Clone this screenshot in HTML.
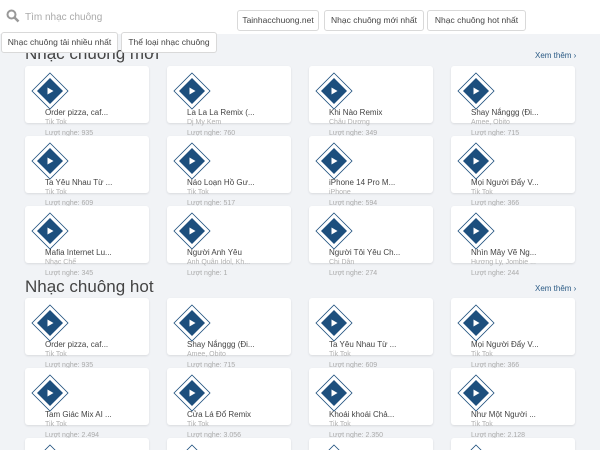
<!DOCTYPE html>
<html><head><meta charset="utf-8"><style>
*{margin:0;padding:0;box-sizing:border-box}
html,body{width:600px;height:450px;overflow:hidden}
body{background:#f1f3f6;font-family:"Liberation Sans",sans-serif;position:relative}
.hdr{position:absolute;left:0;top:0;width:600px;height:34px;background:#fff}
.btn{position:absolute;height:21px;border:1px solid #d9d9d9;border-radius:3px;background:#fff;font-size:8.5px;color:#444;line-height:19px;text-align:center;white-space:nowrap}
.h2{position:absolute;left:25px;font-size:17px;color:#444}
.more{position:absolute;left:535px;font-size:8px;color:#2a5a85}
.c{position:absolute;width:124px;height:57px;background:#fff;border-radius:3px;box-shadow:0 1px 2px rgba(0,0,0,.1)}
.c svg{position:absolute;left:6px;top:6px}
.e{height:12px;overflow:hidden;border-radius:3px 3px 0 0}
.t{position:absolute;left:20px;top:42px;font-size:8px;color:#444;white-space:nowrap}
.a{position:absolute;left:20px;top:53px;font-size:7px;color:#b0b0b0;white-space:nowrap}
.p{position:absolute;left:20px;top:64px;font-size:7px;color:#aaa;white-space:nowrap}
</style></head><body>
<div class="hdr"></div>
<svg style="position:absolute;left:6px;top:9px" width="14" height="14" viewBox="0 0 14 14"><circle cx="5.5" cy="5.5" r="4" fill="none" stroke="#999" stroke-width="2"/><path d="M8.5 8.5L12.5 12.5" stroke="#999" stroke-width="2.5"/></svg>
<div style="position:absolute;left:25px;top:12px;font-size:10px;color:#aaa">Tìm nhạc chuông</div>
<div class="btn" style="left:237px;top:10px;width:82px">Tainhacchuong.net</div>
<div class="btn" style="left:324px;top:10px;width:100px">Nhạc chuông mới nhất</div>
<div class="btn" style="left:427px;top:10px;width:99px">Nhạc chuông hot nhất</div>
<div class="h2" style="top:44px">Nhạc chuông mới</div>
<div class="btn" style="left:1px;top:32px;width:117px">Nhạc chuông tải nhiều nhất</div>
<div class="btn" style="left:121px;top:32px;width:96px">Thể loại nhạc chuông</div>
<div class="more" style="top:51px">Xem thêm ›</div>
<div class="h2" style="top:277px">Nhạc chuông hot</div>
<div class="more" style="top:284px">Xem thêm ›</div>

<svg width="0" height="0" style="position:absolute"><defs><g id="d"><path d="M19 1L37 19L19 37L1 19Z" fill="#fff" stroke="#1d4f7d" stroke-width="0.8"/><path d="M19 6L32 19L19 32L6 19Z" fill="#1d4f7d"/><path d="M16.5 15.5L22.5 19L16.5 22.5Z" fill="#fff"/></g></defs></svg>

<div class="c" style="left:25px;top:66px"><svg width="38" height="38"><use href="#d"/></svg><div class="t">Order pizza, caf...</div><div class="a">Tik Tok</div><div class="p">Lượt nghe: 935</div></div>
<div class="c" style="left:167px;top:66px"><svg width="38" height="38"><use href="#d"/></svg><div class="t">La La La Remix (...</div><div class="a">Dj My Kem</div><div class="p">Lượt nghe: 760</div></div>
<div class="c" style="left:309px;top:66px"><svg width="38" height="38"><use href="#d"/></svg><div class="t">Khi Nào Remix</div><div class="a">Châu Dương</div><div class="p">Lượt nghe: 349</div></div>
<div class="c" style="left:451px;top:66px"><svg width="38" height="38"><use href="#d"/></svg><div class="t">Shay Nắnggg (Đi...</div><div class="a">Amee, Obito</div><div class="p">Lượt nghe: 715</div></div>

<div class="c" style="left:25px;top:136px"><svg width="38" height="38"><use href="#d"/></svg><div class="t">Ta Yêu Nhau Từ ...</div><div class="a">Tik Tok</div><div class="p">Lượt nghe: 609</div></div>
<div class="c" style="left:167px;top:136px"><svg width="38" height="38"><use href="#d"/></svg><div class="t">Náo Loạn Hồ Gư...</div><div class="a">Tik Tok</div><div class="p">Lượt nghe: 517</div></div>
<div class="c" style="left:309px;top:136px"><svg width="38" height="38"><use href="#d"/></svg><div class="t">iPhone 14 Pro M...</div><div class="a">iPhone</div><div class="p">Lượt nghe: 594</div></div>
<div class="c" style="left:451px;top:136px"><svg width="38" height="38"><use href="#d"/></svg><div class="t">Mọi Người Đẩy V...</div><div class="a">Tik Tok</div><div class="p">Lượt nghe: 366</div></div>

<div class="c" style="left:25px;top:206px"><svg width="38" height="38"><use href="#d"/></svg><div class="t">Mafia Internet Lu...</div><div class="a">Nhạc Chế</div><div class="p">Lượt nghe: 345</div></div>
<div class="c" style="left:167px;top:206px"><svg width="38" height="38"><use href="#d"/></svg><div class="t">Người Anh Yêu</div><div class="a">Anh Quân Idol, Kh...</div><div class="p">Lượt nghe: 1</div></div>
<div class="c" style="left:309px;top:206px"><svg width="38" height="38"><use href="#d"/></svg><div class="t">Người Tôi Yêu Ch...</div><div class="a">Chi Dân</div><div class="p">Lượt nghe: 274</div></div>
<div class="c" style="left:451px;top:206px"><svg width="38" height="38"><use href="#d"/></svg><div class="t">Nhìn Mây Vẽ Ng...</div><div class="a">Hương Ly, Jombie ...</div><div class="p">Lượt nghe: 244</div></div>

<div class="c" style="left:25px;top:298px"><svg width="38" height="38"><use href="#d"/></svg><div class="t">Order pizza, caf...</div><div class="a">Tik Tok</div><div class="p">Lượt nghe: 935</div></div>
<div class="c" style="left:167px;top:298px"><svg width="38" height="38"><use href="#d"/></svg><div class="t">Shay Nắnggg (Đi...</div><div class="a">Amee, Obito</div><div class="p">Lượt nghe: 715</div></div>
<div class="c" style="left:309px;top:298px"><svg width="38" height="38"><use href="#d"/></svg><div class="t">Ta Yêu Nhau Từ ...</div><div class="a">Tik Tok</div><div class="p">Lượt nghe: 609</div></div>
<div class="c" style="left:451px;top:298px"><svg width="38" height="38"><use href="#d"/></svg><div class="t">Mọi Người Đẩy V...</div><div class="a">Tik Tok</div><div class="p">Lượt nghe: 366</div></div>

<div class="c" style="left:25px;top:368px"><svg width="38" height="38"><use href="#d"/></svg><div class="t">Tam Giác Mix AI ...</div><div class="a">Tik Tok</div><div class="p">Lượt nghe: 2.494</div></div>
<div class="c" style="left:167px;top:368px"><svg width="38" height="38"><use href="#d"/></svg><div class="t">Cửa Lá Đổ Remix</div><div class="a">Tik Tok</div><div class="p">Lượt nghe: 3.056</div></div>
<div class="c" style="left:309px;top:368px"><svg width="38" height="38"><use href="#d"/></svg><div class="t">Khoái khoái Chả...</div><div class="a">Tik Tok</div><div class="p">Lượt nghe: 2.350</div></div>
<div class="c" style="left:451px;top:368px"><svg width="38" height="38"><use href="#d"/></svg><div class="t">Như Một Người ...</div><div class="a">Tik Tok</div><div class="p">Lượt nghe: 2.128</div></div>

<div class="c e" style="left:25px;top:438px"><svg width="38" height="6"><use href="#d"/></svg></div>
<div class="c e" style="left:167px;top:438px"><svg width="38" height="6"><use href="#d"/></svg></div>
<div class="c e" style="left:309px;top:438px"><svg width="38" height="6"><use href="#d"/></svg></div>
<div class="c e" style="left:451px;top:438px"><svg width="38" height="6"><use href="#d"/></svg></div>
</body></html>
